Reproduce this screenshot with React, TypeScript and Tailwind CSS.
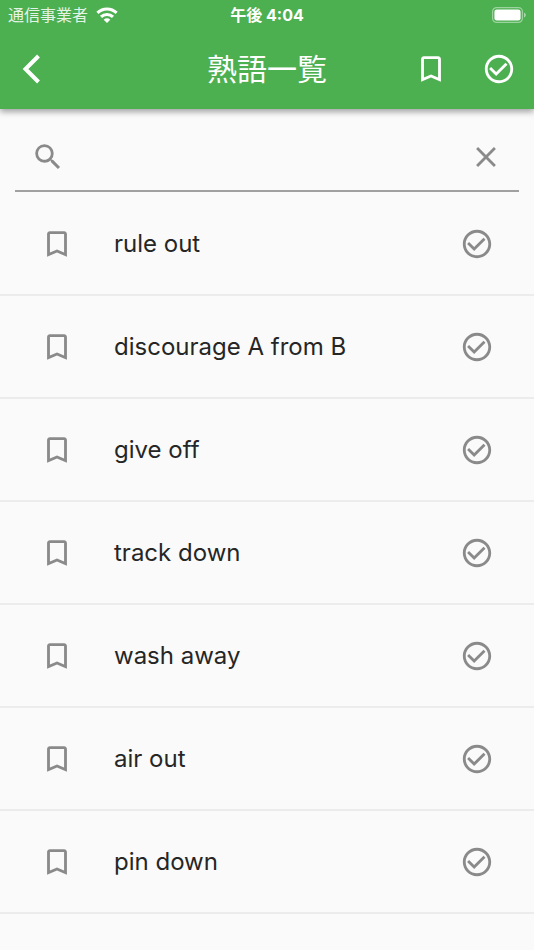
import { useState } from 'react';

type IconProps = {
  className?: string;
};

const phrases = [
  { id: 1, text: 'rule out' },
  { id: 2, text: 'discourage A from B' },
  { id: 3, text: 'give off' },
  { id: 4, text: 'track down' },
  { id: 5, text: 'wash away' },
  { id: 6, text: 'air out' },
  { id: 7, text: 'pin down' },
  { id: 8, text: '' },
];

function BookmarkIcon({ className }: IconProps) {
  return (
    <svg viewBox="0 0 24 24" fill="currentColor" className={className} aria-hidden="true">
      <path d="M17 3H7c-1.1 0-2 .9-2 2v16l7-3 7 3V5c0-1.1-.9-2-2-2zm0 15-5-2.18L7 18V5h10v13z" />
    </svg>
  );
}

function CheckCircleIcon({ className }: IconProps) {
  return (
    <svg viewBox="0 0 24 24" fill="currentColor" className={className} aria-hidden="true">
      <path d="M16.59 7.58 10 14.17l-3.59-3.58L5 12l5 5 8-8zM12 2C6.48 2 2 6.48 2 12s4.48 10 10 10 10-4.48 10-10S17.52 2 12 2zm0 18c-4.42 0-8-3.58-8-8s3.58-8 8-8 8 3.58 8 8-3.58 8-8 8z" />
    </svg>
  );
}

function SearchIcon({ className }: IconProps) {
  return (
    <svg viewBox="0 0 24 24" fill="currentColor" className={className} aria-hidden="true">
      <path d="M15.5 14h-.79l-.28-.27A6.471 6.471 0 0 0 16 9.5 6.5 6.5 0 1 0 9.5 16c1.61 0 3.09-.59 4.23-1.57l.27.28v.79l5 4.99L20.49 19l-4.99-5zm-6 0C7.01 14 5 11.99 5 9.5S7.01 5 9.5 5 14 7.01 14 9.5 11.99 14 9.5 14z" />
    </svg>
  );
}

function CloseIcon({ className }: IconProps) {
  return (
    <svg viewBox="0 0 24 24" fill="currentColor" className={className} aria-hidden="true">
      <path d="M19 6.41 17.59 5 12 10.59 6.41 5 5 6.41 10.59 12 5 17.59 6.41 19 12 13.41 17.59 19 19 17.59 13.41 12z" />
    </svg>
  );
}

function BackIcon({ className }: IconProps) {
  return (
    <svg viewBox="0 0 34 34" fill="none" stroke="currentColor" strokeWidth={4} className={className} aria-hidden="true">
      <path d="M20.5 4 7.5 17l13 13" />
    </svg>
  );
}

function WifiIcon({ className }: IconProps) {
  return (
    <svg viewBox="0 0 22 16" fill="none" stroke="currentColor" strokeWidth={3} className={className} aria-hidden="true">
      <path d="M1.4 5.9a13.6 13.6 0 0 1 19.2 0" />
      <path d="M5 9.9a8.5 8.5 0 0 1 12 0" />
      <path d="M11 16 7.7 12.7a4.7 4.7 0 0 1 6.6 0z" fill="currentColor" stroke="none" />
    </svg>
  );
}

function BatteryIcon({ className }: IconProps) {
  return (
    <svg viewBox="0 0 34 16" fill="currentColor" className={className} aria-hidden="true">
      <rect x="0.6" y="0.6" width="29.8" height="14.8" rx="4" fill="none" stroke="currentColor" strokeWidth={1.2} opacity={0.45} />
      <rect x="2.4" y="2.4" width="26.2" height="11.2" rx="2.4" />
      <path d="M32 5.4c1 .4 1.8 1.4 1.8 2.6s-.8 2.2-1.8 2.6z" opacity={0.5} />
    </svg>
  );
}

function StatusBar() {
  return (
    <div className="grid h-[30px] grid-cols-3 items-center px-2">
      <div className="flex items-center gap-2">
        <span className="text-[16px] leading-6 whitespace-nowrap opacity-85">通信事業者</span>
        <WifiIcon className="h-4 w-[22px] shrink-0" />
      </div>
      <div className="text-center text-[16px] leading-6 font-bold">午後 4:04</div>
      <BatteryIcon className="h-4 w-[34px] justify-self-end" />
    </div>
  );
}

export default function App() {
  const [query, setQuery] = useState('');

  return (
    <div className="flex h-screen flex-col overflow-hidden bg-[#fafafa] font-[Inter,'Noto_Sans_CJK_JP',sans-serif] text-[#262626]">
      <header className="relative z-10 bg-[#4caf50] text-white shadow-[0_3px_6px_rgba(0,0,0,0.35)]">
        <StatusBar />
        <div className="grid h-[79px] grid-cols-[1fr_auto_1fr] items-center px-[18px] pb-0.5">
          <button type="button" aria-label="戻る" className="justify-self-start">
            <BackIcon className="size-[34px]" />
          </button>
          <h1 className="text-[30px] leading-9 font-normal">熟語一覧</h1>
          <div className="flex gap-[34px] justify-self-end">
            <button type="button" aria-label="ブックマーク">
              <BookmarkIcon className="size-[34px]" />
            </button>
            <button type="button" aria-label="チェック済み">
              <CheckCircleIcon className="size-[34px]" />
            </button>
          </div>
        </div>
      </header>

      <div className="mx-[15px] mb-px flex h-[83px] shrink-0 items-center border-b-2 border-[#a0a0a0] px-4 pt-3.5 text-[#8a8a8a]">
        <label htmlFor="search" aria-label="検索">
          <SearchIcon className="size-[34px]" />
        </label>
        <input
          id="search"
          type="text"
          value={query}
          onChange={(e) => setQuery(e.target.value)}
          className="min-w-0 flex-1 bg-transparent px-4 text-2xl text-[#262626] outline-none"
        />
        <button type="button" aria-label="クリア" onClick={() => setQuery('')}>
          <CloseIcon className="size-[34px]" />
        </button>
      </div>

      <ul className="min-h-0 flex-1 overflow-y-auto [scrollbar-width:none]">
        {phrases
          .filter((phrase) => phrase.text.includes(query))
          .map((phrase) => (
            <li key={phrase.id} className="flex h-[103px] items-center border-b-2 border-[#ececec] px-10">
              <button type="button" aria-label="ブックマーク" className="text-[#8a8a8a]">
                <BookmarkIcon className="size-[34px]" />
              </button>
              <span className="ml-10 flex-1 text-2xl">{phrase.text}</span>
              <button type="button" aria-label="チェック" className="text-[#8a8a8a]">
                <CheckCircleIcon className="size-[34px]" />
              </button>
            </li>
          ))}
      </ul>
    </div>
  );
}
